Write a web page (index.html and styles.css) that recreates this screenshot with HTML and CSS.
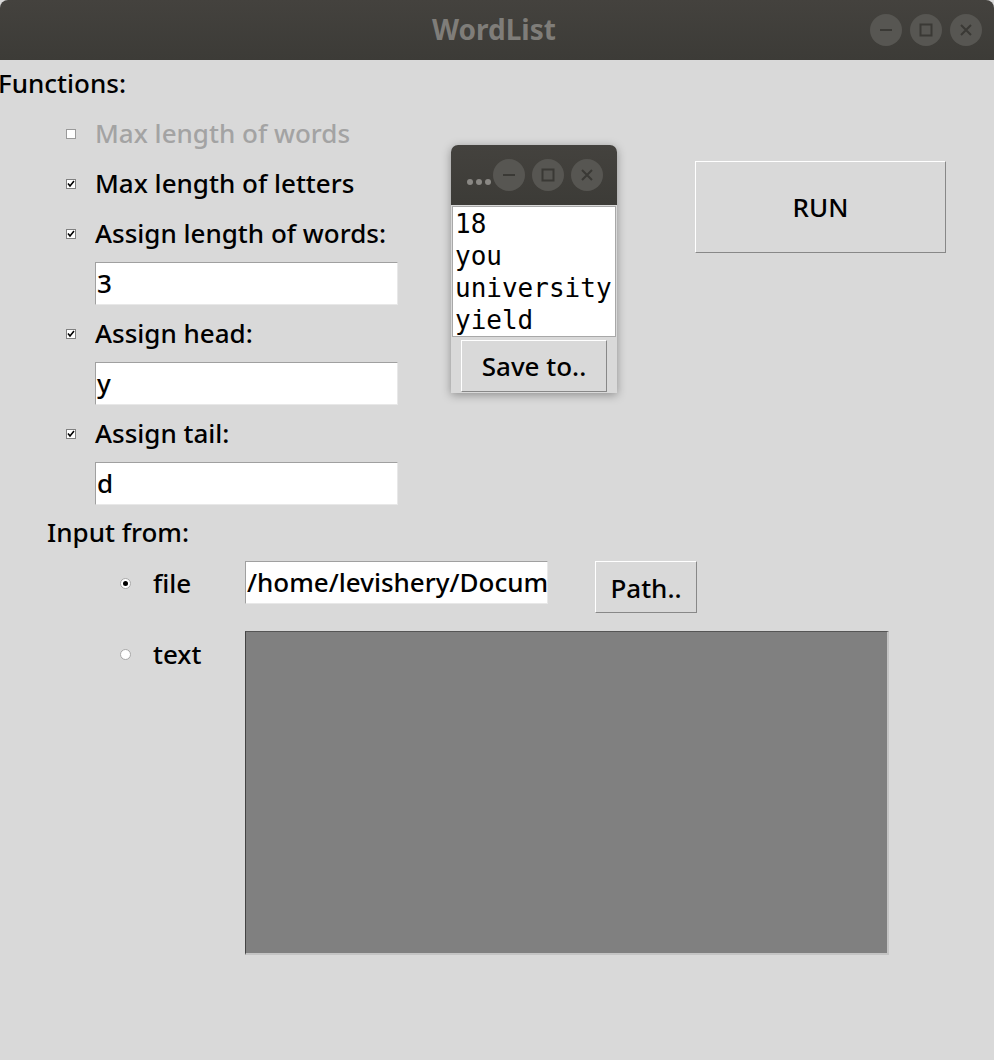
FILE: index.html
```html
<!DOCTYPE html>
<html>
<head>
<meta charset="utf-8">
<link rel="stylesheet" href="styles.css">
</head>
<body>
<div class="app">
  <header class="titlebar">
    <div class="title">WordList</div>
    <div class="wm-buttons">
      <span class="wm-btn"><svg width="32" height="32" viewBox="0 0 32 32"><line x1="10" y1="16" x2="22" y2="16" stroke="#3a3935" stroke-width="2"/></svg></span>
      <span class="wm-btn"><svg width="32" height="32" viewBox="0 0 32 32"><rect x="10.5" y="10.5" width="11" height="11" fill="none" stroke="#3a3935" stroke-width="2"/></svg></span>
      <span class="wm-btn"><svg width="32" height="32" viewBox="0 0 32 32"><path d="M11 11 L21 21 M21 11 L11 21" stroke="#3a3935" stroke-width="2"/></svg></span>
    </div>
  </header>
  <main class="content">
    <div class="functions-label">Functions:</div>
    <div class="top">
      <div class="options">
        <div class="opt disabled"><span class="cb"></span><span class="opt-text">Max length of words</span></div>
        <div class="opt"><span class="cb checked"><svg width="8" height="8" viewBox="0 0 8 8"><path d="M1 3.5 L3 6 L7 1" fill="none" stroke="#000" stroke-width="1.6"/></svg></span><span class="opt-text">Max length of letters</span></div>
        <div class="opt"><span class="cb checked"><svg width="8" height="8" viewBox="0 0 8 8"><path d="M1 3.5 L3 6 L7 1" fill="none" stroke="#000" stroke-width="1.6"/></svg></span><span class="opt-text">Assign length of words:</span></div>
        <div class="entry-row"><div class="entry">3</div></div>
        <div class="opt"><span class="cb checked"><svg width="8" height="8" viewBox="0 0 8 8"><path d="M1 3.5 L3 6 L7 1" fill="none" stroke="#000" stroke-width="1.6"/></svg></span><span class="opt-text">Assign head:</span></div>
        <div class="entry-row"><div class="entry">y</div></div>
        <div class="opt"><span class="cb checked"><svg width="8" height="8" viewBox="0 0 8 8"><path d="M1 3.5 L3 6 L7 1" fill="none" stroke="#000" stroke-width="1.6"/></svg></span><span class="opt-text">Assign tail:</span></div>
        <div class="entry-row"><div class="entry">d</div></div>
      </div>
      <button class="btn run">RUN</button>
    </div>
    <div class="input-label">Input from:</div>
    <div class="src-row file-row">
      <span class="radio selected"><span class="dot"></span></span>
      <span class="src-text">file</span>
      <div class="entry path-entry">/home/levishery/Documents/words.txt</div>
      <button class="btn path-btn">Path..</button>
    </div>
    <div class="src-row text-row">
      <span class="radio"></span>
      <span class="src-text">text</span>
      <div class="textbox"></div>
    </div>
  </main>

  <div class="popup">
    <div class="popup-bar">
      <span class="dots"><i></i><i></i><i></i></span>
      <span class="wm-btn small"><svg width="32" height="32" viewBox="0 0 32 32"><line x1="10" y1="16" x2="22" y2="16" stroke="#3a3935" stroke-width="2"/></svg></span>
      <span class="wm-btn small"><svg width="32" height="32" viewBox="0 0 32 32"><rect x="10.5" y="10.5" width="11" height="11" fill="none" stroke="#3a3935" stroke-width="2"/></svg></span>
      <span class="wm-btn small"><svg width="32" height="32" viewBox="0 0 32 32"><path d="M11 11 L21 21 M21 11 L11 21" stroke="#3a3935" stroke-width="2"/></svg></span>
    </div>
    <div class="popup-body">
      <div class="result">18<br>you<br>university<br>yield</div>
      <button class="btn save-btn">Save to..</button>
    </div>
  </div>
</div>
</body>
</html>
```

FILE: styles.css
```css
html, body {
  margin: 0;
  padding: 0;
}
body {
  background: #d9d9d9;
  font-family: "Noto Sans", "Open Sans", sans-serif;
  font-weight: 500;
  color: #000;
  width: 994px;
  height: 1060px;
  overflow: hidden;
}
.app {
  position: relative;
  width: 994px;
  height: 1060px;
}
.titlebar {
  height: 60px;
  background: linear-gradient(#44423e, #3c3b37);
  border-radius: 8px 8px 0 0;
  display: flex;
  align-items: center;
  justify-content: center;
  position: relative;
}
.title {
  font-family: "Noto Sans", sans-serif;
  font-weight: bold;
  font-size: 28px;
  color: #7f7d79;
  margin-top: -2px;
  margin-left: -6px;
}
.wm-buttons {
  position: absolute;
  right: 12px;
  top: 14px;
  display: flex;
  gap: 8px;
}
.wm-btn {
  width: 32px;
  height: 32px;
  border-radius: 50%;
  background: #575652;
  display: block;
}
.wm-btn svg { display: block; }

.content {
  display: flex;
  flex-direction: column;
}
.functions-label {
  height: 49px;
  line-height: 47px;
  font-size: 26px;
  margin-left: -2px;
}
.top {
  display: flex;
  align-items: flex-start;
}
.options {
  padding-left: 66px;
  display: flex;
  flex-direction: column;
}
.opt {
  height: 50px;
  display: flex;
  align-items: center;
  font-size: 26px;
}
.opt.disabled { color: #a3a3a3; }
.cb {
  width: 8px;
  height: 8px;
  border: 1px solid #808080;
  background: #fff;
  margin-right: 19px;
  display: flex;
  align-items: center;
  justify-content: center;
}
.opt.disabled .cb { border-color: #9a9a9a; }
.cb svg { display: block; }
.opt-text { margin-top: -2px; }
.entry-row {
  height: 50px;
  padding-left: 29px;
  box-sizing: border-box;
  padding-top: 3px;
}
.entry {
  width: 303px;
  height: 43px;
  box-sizing: border-box;
  background: #fff;
  border-top: 1px solid #a0a0a0;
  border-left: 1px solid #a0a0a0;
  border-right: 1px solid #e8e8e8;
  border-bottom: 1px solid #e8e8e8;
  font-size: 26px;
  line-height: 40px;
  padding-left: 1px;
  white-space: nowrap;
  overflow: hidden;
}
.btn {
  font-family: "Noto Sans", sans-serif;
  font-weight: 500;
  font-size: 26px;
  color: #000;
  background: #d9d9d9;
  border-top: 1px solid #fff;
  border-left: 1px solid #fff;
  border-right: 1px solid #888;
  border-bottom: 1px solid #888;
  box-sizing: border-box;
  padding: 0;
}
.run {
  width: 251px;
  height: 92px;
  margin-left: auto;
  margin-right: 48px;
  margin-top: 52px;
}
.input-label {
  height: 50px;
  line-height: 46px;
  font-size: 26px;
  padding-left: 47px;
}
.src-row {
  display: flex;
  align-items: flex-start;
  padding-left: 120px;
}
.file-row {
  margin-top: 2px;
}
.radio {
  width: 11px;
  height: 11px;
  border-radius: 50%;
  background: #fff;
  box-sizing: border-box;
  border: 1px solid #a8a8a8;
  display: flex;
  align-items: center;
  justify-content: center;
}
.radio .dot {
  width: 5px;
  height: 5px;
  border-radius: 50%;
  background: #000;
}
.src-text {
  font-size: 26px;
  width: 92px;
  margin-left: 22px;
  line-height: 44px;
}
.file-row .radio { margin-top: 17px; }
.text-row .radio { margin-top: 18px; }
.text-row .src-text { line-height: 46px; }
.path-entry {
  width: 303px;
}
.path-btn {
  margin-left: 47px;
  width: 102px;
  height: 52px;
  padding-top: 2px;
}
.text-row {
  margin-top: 18px;
}
.textbox {
  width: 644px;
  height: 324px;
  box-sizing: border-box;
  background: #808080;
  border-top: 1px solid #555;
  border-left: 1px solid #444;
  border-right: 2px solid #c4c4c4;
  border-bottom: 2px solid #c4c4c4;
}

.popup {
  position: absolute;
  left: 451px;
  top: 145px;
  width: 166px;
  height: 248px;
  background: #d9d9d9;
  border-radius: 7px 7px 0 0;
  box-shadow: 0 2px 10px rgba(0,0,0,0.35);
  overflow: hidden;
}
.popup-bar {
  height: 60px;
  background: linear-gradient(#44423e, #3c3b37);
  display: flex;
  align-items: center;
  padding-left: 16px;
  box-sizing: border-box;
}
.dots {
  display: flex;
  gap: 3px;
  margin-top: 14px;
  margin-right: 2px;
}
.dots i {
  width: 6px;
  height: 6px;
  border-radius: 50%;
  background: #8a8884;
  display: block;
}
.wm-btn.small {
  margin-right: 7px;
}
.popup-body {
  display: flex;
  flex-direction: column;
}
.result {
  margin: 1px 1px 0 1px;
  height: 131px;
  box-sizing: border-box;
  background: #fff;
  border: 1px solid #a8a8a8;
  font-family: "DejaVu Sans Mono", monospace;
  font-weight: normal;
  font-size: 26px;
  line-height: 32px;
  padding-left: 2px;
  padding-top: 1px;
  overflow: hidden;
}
.save-btn {
  margin: 3px 0 0 10px;
  width: 146px;
  height: 52px;
}
```
